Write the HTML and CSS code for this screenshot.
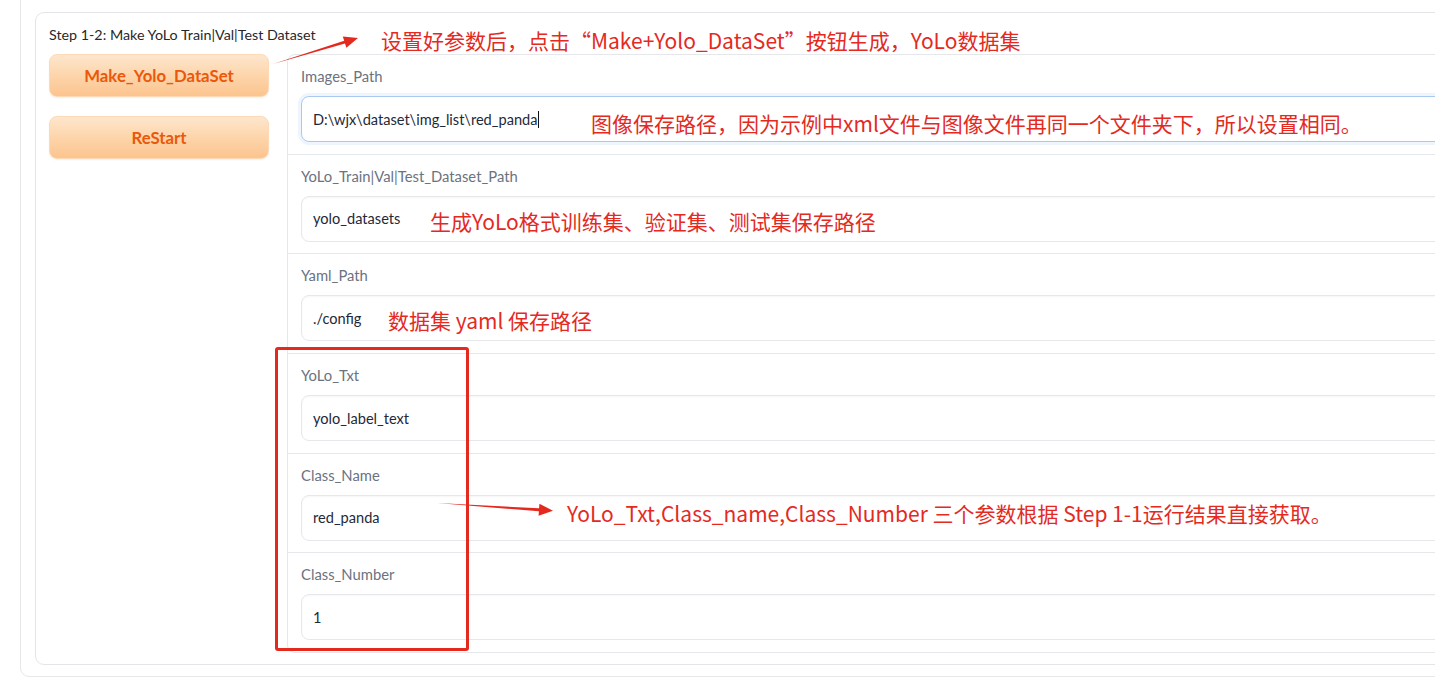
FILE: index.html
```html
<!DOCTYPE html>
<html lang="zh-CN">
<head>
<meta charset="utf-8">
<title>Make YoLo Dataset</title>
<link rel="stylesheet" href="styles.css">
</head>
<body>
<div class="outer">
  <div class="panel">
    <div class="title">Step 1-2: Make YoLo Train|Val|Test Dataset</div>
    <div class="row">
      <div class="buttons">
        <button class="btn">Make_Yolo_DataSet</button>
        <button class="btn">ReStart</button>
      </div>
      <div class="form">
        <div class="field">
          <div class="label">Images_Path</div>
          <div class="input focus">D:\wjx\dataset\img_list\red_panda<span class="caret"></span></div>
        </div>
        <div class="field">
          <div class="label">YoLo_Train|Val|Test_Dataset_Path</div>
          <div class="input">yolo_datasets</div>
        </div>
        <div class="field">
          <div class="label">Yaml_Path</div>
          <div class="input">./config</div>
        </div>
        <div class="field">
          <div class="label">YoLo_Txt</div>
          <div class="input">yolo_label_text</div>
        </div>
        <div class="field">
          <div class="label">Class_Name</div>
          <div class="input">red_panda</div>
        </div>
        <div class="field">
          <div class="label">Class_Number</div>
          <div class="input">1</div>
        </div>
      </div>
    </div>
  </div>
</div>

<div class="note n1">设置好参数后，点击“Make+Yolo_DataSet”按钮生成，YoLo数据集</div>
<div class="note n2">图像保存路径，因为示例中xml文件与图像文件再同一个文件夹下，所以设置相同。</div>
<div class="note n3">生成YoLo格式训练集、验证集、测试集保存路径</div>
<div class="note n4">数据集 yaml 保存路径</div>
<div class="note n5">YoLo_Txt,Class_name,Class_Number 三个参数根据 Step 1-1运行结果直接获取。</div>
<div class="redbox"></div>
<svg class="arrows" width="1435" height="690" viewBox="0 0 1435 690">
  <polygon fill="#e42a1f" points="273,64 345.0,43.5 346.4,47.8 358,38 342.8,36.4 344.2,40.7"/>
  <polygon fill="#e42a1f" points="437,503 538.9,511.3 538.6,515.8 553,510.7 539.4,503.8 539.1,508.3"/>
</svg>
</body>
</html>
```
FILE: styles.css
```css
html, body {
  margin: 0;
  padding: 0;
  background: #ffffff;
  overflow: hidden;
  width: 1435px;
  height: 690px;
}
body {
  position: relative;
  font-family: Lato, "Noto Sans", sans-serif;
  color: #1f2937;
}
.outer {
  box-sizing: border-box;
  width: 1500px;
  margin: -10px 0 0 20px;
  padding: 21px 14px 11px 14px;
  border: 1px solid #e6e7ea;
  border-radius: 9px;
  background: #fff;
}
.panel {
  border: 1px solid #e4e5e8;
  border-radius: 9px;
  padding: 12px 13px 11px 13px;
  background: #fff;
}
.title {
  font-size: 14.3px;
  line-height: 20px;
  color: #27272a;
  margin-bottom: 9px;
}
.row {
  display: flex;
  gap: 18px;
  align-items: flex-start;
}
.buttons {
  width: 220px;
  flex: none;
  display: flex;
  flex-direction: column;
  gap: 19px;
}
.btn {
  height: 43px;
  border: 1px solid #fdd9b5;
  border-radius: 8px;
  background: linear-gradient(180deg, #fee6cd 0%, #fdd3a8 55%, #fcc48e 100%);
  color: #ea580c;
  font-family: Lato, "Noto Sans", sans-serif;
  font-weight: 700;
  font-size: 16.8px;
  box-shadow: 0 1px 2px rgba(0,0,0,0.06);
  padding: 0;
  cursor: pointer;
}
.form {
  flex: 1;
  border: 1px solid #e5e7eb;
  border-radius: 8px;
  background: #e5e7eb;
  display: flex;
  flex-direction: column;
  gap: 1px;
  overflow: hidden;
}
.field {
  background: #fff;
  padding: 11px 13px 11.7px 13px;
}
.label {
  font-size: 14.8px;
  line-height: 20px;
  color: #6b7280;
  margin-bottom: 10px;
}
.input {
  box-sizing: border-box;
  height: 46px;
  border: 1px solid #e5e7eb;
  border-radius: 8px;
  padding: 0 11px;
  display: flex;
  align-items: center;
  font-size: 14.6px;
  color: #1f2937;
  background: #fff;
  box-shadow: inset 0 1px 2px rgba(0,0,0,0.04);
}
.input.focus {
  border-color: #a9c9f1;
  box-shadow: 0 0 0 3px #eef5fd;
}
.caret {
  display: inline-block;
  width: 1px;
  height: 17px;
  background: #111;
  margin-left: 1px;
}
.note {
  position: absolute;
  font-family: "Noto Sans CJK SC", "Microsoft YaHei", sans-serif;
  font-size: 21px;
  line-height: 28px;
  color: #e42a1f;
  white-space: nowrap;
}
.n1 { left: 381px; top: 26px; }
.n2 { left: 591px; top: 109px; }
.n3 { left: 430px; top: 207px; }
.n4 { left: 388px; top: 306px; }
.n5 { left: 567px; top: 499px; }
.redbox {
  position: absolute;
  left: 275px;
  top: 347px;
  width: 188px;
  height: 298px;
  border: 3px solid #e42a1f;
  border-radius: 3px;
}
.arrows {
  position: absolute;
  left: 0;
  top: 0;
  pointer-events: none;
}
```
